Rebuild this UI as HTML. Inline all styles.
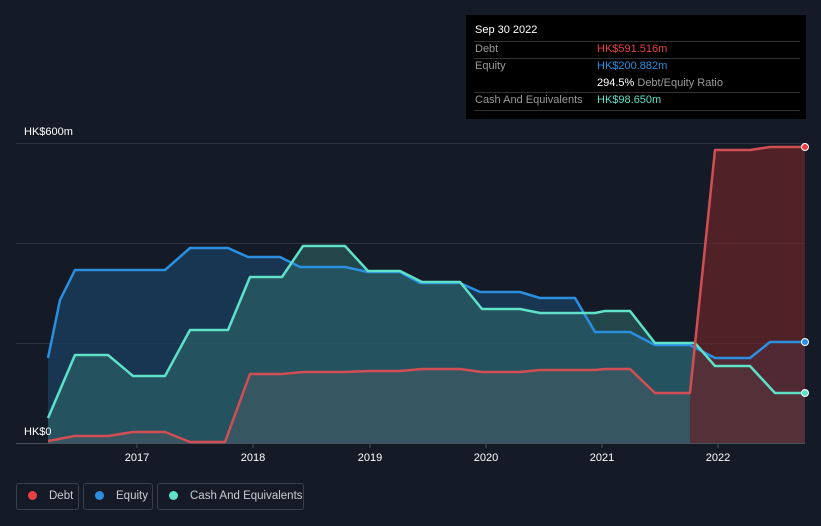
<!DOCTYPE html>
<html><head><meta charset="utf-8"><style>
html,body{margin:0;width:821px;height:526px;overflow:hidden}
body{background:#151b26;font-family:"Liberation Sans",sans-serif;position:relative}
.tt{position:absolute;left:466px;top:15px;width:340px;height:104px;background:#000;font-size:11px;color:#999}
.row{position:absolute;left:8px;width:326px;border-bottom:1px solid #333}
.lg{position:absolute;top:483px;height:27px;border:1px solid #3a404b;border-radius:3px;color:#c8ccd2;font-size:11.5px;line-height:25px;box-sizing:border-box;white-space:nowrap;overflow:hidden}
.lg i{display:inline-block;width:9px;height:9px;border-radius:50%;margin:0 12px 0 11px;vertical-align:-1px}
</style></head><body>
<svg width="821" height="526" style="position:absolute;left:0;top:0">
<g stroke="#2c323d" stroke-width="1">
<line x1="16" y1="143.5" x2="805" y2="143.5"/><line x1="16" y1="243.5" x2="805" y2="243.5"/><line x1="16" y1="343.5" x2="805" y2="343.5"/><line x1="16" y1="443.5" x2="805" y2="443.5" stroke="#4a505a"/>
</g>
<g stroke="#4a505a"><line x1="137" y1="443" x2="137" y2="448"/><line x1="253" y1="443" x2="253" y2="448"/><line x1="370" y1="443" x2="370" y2="448"/><line x1="486" y1="443" x2="486" y2="448"/><line x1="602" y1="443" x2="602" y2="448"/><line x1="718" y1="443" x2="718" y2="448"/></g>
<polygon fill="#1a4060" fill-opacity="0.75" points="48,358 60,300 75,270 165,270 190,248 228,248 248,257 280,257 300,267 345,267 368,272 400,272 420,283 460,283 480,292 520,292 540,298 575,298 595,332 630,332 655,345 690,345 715,358 750,358 770,342 805,342 805,443 48,443"/>
<polygon fill="#2f6a6a" fill-opacity="0.55" points="48,418 75,355 108,355 133,376 165,376 190,330 228,330 250,277 282,277 303,246 345,246 368,271 400,271 422,282 460,282 482,309 520,309 540,313 595,313 605,311 630,311 655,343 695,343 715,366 750,366 775,393 805,393 805,443 48,443"/>
<polygon fill="#6a2328" fill-opacity="0.7" points="690,393 715,150 750,150 770,147 805,147 805,443 690,443"/>
<polygon fill="#5a5f66" fill-opacity="0.35" points="48,441 75,436 108,436 133,432 165,432 190,442 225,442 250,374 282,374 303,372 345,372 368,371 400,371 422,369 460,369 482,372 520,372 540,370 595,370 605,369 630,369 655,393 690,393 690,443 48,443"/>
<g fill="none" stroke-width="2.5" stroke-linejoin="round">
<polyline stroke="#2b8fe0" points="48,358 60,300 75,270 165,270 190,248 228,248 248,257 280,257 300,267 345,267 368,272 400,272 420,283 460,283 480,292 520,292 540,298 575,298 595,332 630,332 655,345 690,345 715,358 750,358 770,342 805,342"/>
<polyline stroke="#5fe0c8" points="48,418 75,355 108,355 133,376 165,376 190,330 228,330 250,277 282,277 303,246 345,246 368,271 400,271 422,282 460,282 482,309 520,309 540,313 595,313 605,311 630,311 655,343 695,343 715,366 750,366 775,393 805,393"/>
<polyline stroke="#d24e55" points="48,441 75,436 108,436 133,432 165,432 190,442 225,442 250,374 282,374 303,372 345,372 368,371 400,371 422,369 460,369 482,372 520,372 540,370 595,370 605,369 630,369 655,393 690,393 715,150 750,150 770,147 805,147"/>
</g>
<circle cx="805" cy="147" r="3.5" fill="#e84045" stroke="#fff" stroke-width="1"/>
<circle cx="805" cy="342" r="3.5" fill="#2b8fe0" stroke="#fff" stroke-width="1"/>
<circle cx="805" cy="393" r="3.5" fill="#5fe0c8" stroke="#fff" stroke-width="1"/>
<g fill="#fff" font-size="11" font-family="Liberation Sans,sans-serif">
<text x="24" y="135">HK$600m</text><text x="24" y="435">HK$0</text>
<g text-anchor="middle"><text x="137" y="461">2017</text><text x="253" y="461">2018</text><text x="370" y="461">2019</text><text x="486" y="461">2020</text><text x="602" y="461">2021</text><text x="718" y="461">2022</text></g>
</g>
</svg>
<div class="tt">
<div style="position:absolute;left:9px;top:9px;color:#fff">Sep 30 2022</div>
<div class="row" style="top:26px"></div>
<div style="position:absolute;left:9px;top:28px">Debt</div><div style="position:absolute;left:131px;top:28px;color:#e84045">HK$591.516m</div>
<div class="row" style="top:43px"></div>
<div style="position:absolute;left:9px;top:45px">Equity</div><div style="position:absolute;left:131px;top:45px;color:#2b8fe0">HK$200.882m</div>
<div style="position:absolute;left:131px;top:62px"><span style="color:#fff">294.5%</span> Debt/Equity Ratio</div>
<div class="row" style="top:77px"></div>
<div style="position:absolute;left:9px;top:79px">Cash And Equivalents</div><div style="position:absolute;left:131px;top:79px;color:#5fe0c8">HK$98.650m</div>
<div class="row" style="top:95px"></div>
</div>
<div class="lg" style="left:16px;width:63px"><i style="background:#e84045"></i>Debt</div>
<div class="lg" style="left:83px;width:70px"><i style="background:#2b8fe0"></i>Equity</div>
<div class="lg" style="left:157px;width:147px"><i style="background:#5fe0c8"></i>Cash And Equivalents</div>
</body></html>
